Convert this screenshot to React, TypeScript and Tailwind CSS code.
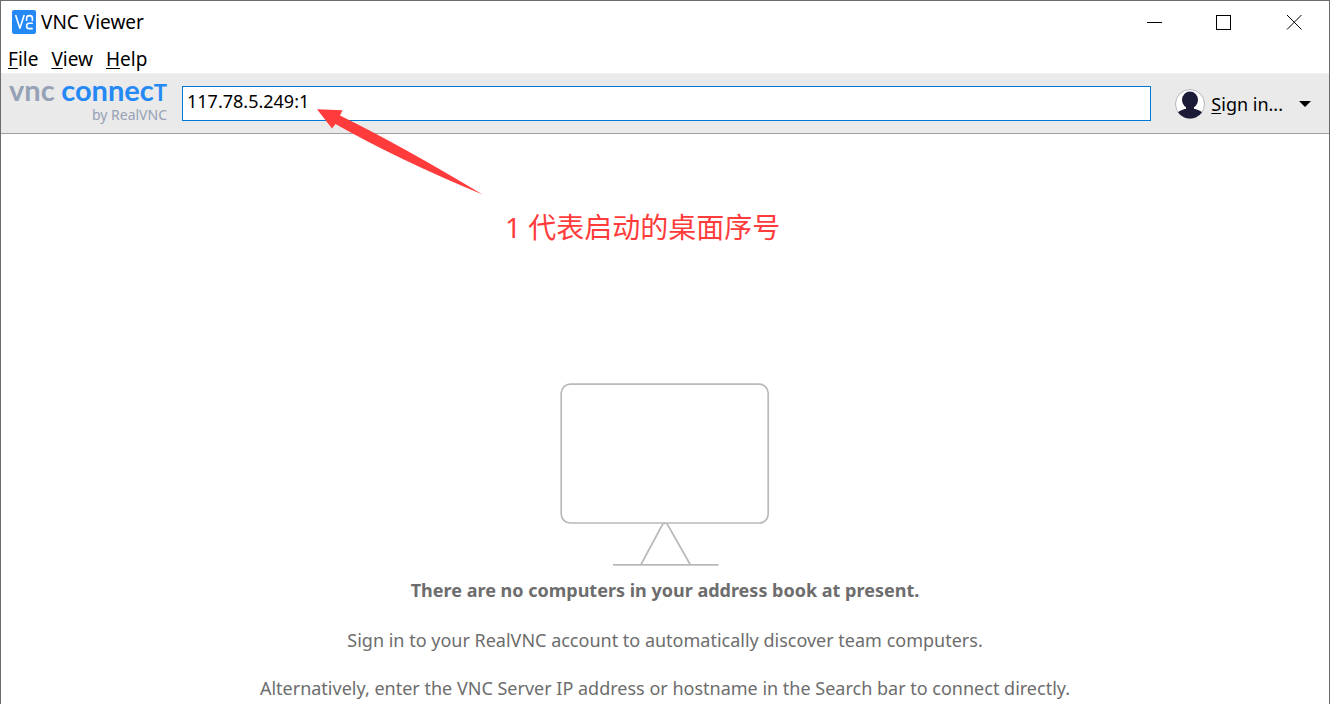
import type { ReactNode } from 'react';

const menus = [
  { key: 'F', rest: 'ile' },
  { key: 'V', rest: 'iew' },
  { key: 'H', rest: 'elp' },
];

function AppIcon() {
  return (
    <svg width="24" height="24" viewBox="0 0 24 24" fill="none" aria-hidden="true">
      <rect width="24" height="24" rx="2" fill="#2489f5" />
      <g stroke="#ffffff" strokeWidth="1.6">
        <path d="M3.6 5 7.9 18.3 12.2 5" strokeLinejoin="round" />
        <path d="M14.6 11V8.2c0-1.7 1-2.6 2.9-2.6s2.9.9 2.9 2.6V11" />
        <path d="M20.8 13.2h-3.6c-1.7 0-2.6.9-2.6 2.7s.9 2.7 2.6 2.7h3.6" />
      </g>
    </svg>
  );
}

function Logo() {
  return (
    <div className="flex w-[158px] flex-col pb-1 font-['Lato',sans-serif]">
      <div className="flex items-baseline justify-between text-[29px] leading-5 font-bold">
        <span className="text-[#95a1b5]">vnc</span>
        <span className="text-[#2489f5]">
          connec<span className="text-[22px] leading-5">T</span>
        </span>
      </div>
      <div className="mt-1 text-right font-['Noto_Sans',sans-serif] text-sm leading-4 text-[#95a1b5]">
        by RealVNC
      </div>
    </div>
  );
}

function Avatar() {
  return (
    <svg width="30" height="30" viewBox="0 0 30 30" aria-hidden="true">
      <clipPath id="avatar">
        <circle cx="15" cy="15" r="14.5" />
      </clipPath>
      <circle cx="15" cy="15" r="14.5" fill="#ffffff" stroke="#b5b5bb" />
      <g clipPath="url(#avatar)" fill="#1b1b38">
        <ellipse cx="15" cy="11" rx="8" ry="8.5" />
        <rect x="11" y="16" width="8" height="6" />
        <ellipse cx="15" cy="27" rx="14" ry="7.5" />
      </g>
    </svg>
  );
}

function Monitor() {
  return (
    <svg
      width="210"
      height="184"
      viewBox="0 0 210 184"
      fill="none"
      stroke="#b9b9bd"
      strokeWidth="1.7"
      aria-hidden="true"
    >
      <rect x="1.2" y="1.2" width="207" height="138.8" rx="9" />
      <path d="M81 181.5 102.2 142q2.8-3.5 5.6 0l22.4 39.5" />
      <path d="M53 181.8h105.5" />
    </svg>
  );
}

function Arrow() {
  return (
    <svg width="166" height="87" viewBox="0 0 166 87" fill="#ff3b3b" aria-hidden="true">
      <path d="M0 1.2 25.5 2.2 23 7.5Q85 38 165.5 86.5 80 51 18.5 16L15 20.5Z" />
    </svg>
  );
}

function WindowButton({ label, children }: { label: string; children: ReactNode }) {
  return (
    <button type="button" aria-label={label} className="flex h-full w-[70px] items-center justify-center">
      <svg width="16" height="16" fill="none" stroke="#000000" shapeRendering="crispEdges">
        {children}
      </svg>
    </button>
  );
}

export default function App() {
  return (
    <div className="relative flex min-h-screen flex-col border-x border-t border-[#6b6b6b] bg-white font-['Noto_Sans','Noto_Sans_CJK_SC',sans-serif] text-lg text-black">
      <header className="flex h-[42px] items-center">
        <div className="flex flex-1 items-center gap-[5px] pl-[11px]">
          <AppIcon />
          <h1 className="text-[19px] leading-6">VNC Viewer</h1>
        </div>
        <div className="flex h-full">
          <WindowButton label="Minimize">
            <path d="M1 8.5h15" />
          </WindowButton>
          <WindowButton label="Maximize">
            <rect x="0.5" y="1.5" width="14" height="14" />
          </WindowButton>
          <WindowButton label="Close">
            <path d="M1 1 15.5 15.5M15.5 1 1 15.5" shapeRendering="auto" />
          </WindowButton>
        </div>
      </header>

      <nav className="flex h-[30px] items-end gap-[13px] px-[7px] text-[19px]">
        {menus.map((menu) => (
          <button key={menu.key} type="button" className="leading-7">
            <span className="underline underline-offset-2">{menu.key}</span>
            {menu.rest}
          </button>
        ))}
      </nav>

      <div className="flex h-[61px] items-center border-t border-b border-t-[#f0f0f0] border-b-[#a0a0a0] bg-[#eaeaea] pl-2">
        <Logo />
        <input
          type="text"
          aria-label="Address"
          defaultValue="117.78.5.249:1"
          className="ml-[15px] h-[35px] min-w-0 flex-1 border border-[#0078d7] bg-white px-1 pb-[6px] outline-none"
        />
        <button type="button" className="ml-6 flex items-center pr-[18px]">
          <Avatar />
          <span className="ml-[6px]">
            <span className="underline underline-offset-2">S</span>ign in...
          </span>
          <svg className="ml-4" width="12" height="6" aria-hidden="true">
            <path d="M0 0h12L6 6Z" />
          </svg>
        </button>
      </div>

      <main className="flex flex-1 flex-col items-center pt-[249px] text-center text-[#6d6d6d]">
        <Monitor />
        <p className="mt-[11px] leading-6 font-bold">There are no computers in your address book at present.</p>
        <p className="mt-[26px] leading-6">Sign in to your RealVNC account to automatically discover team computers.</p>
        <p className="mt-6 leading-6">
          Alternatively, enter the VNC Server IP address or hostname in the Search bar to connect directly.
        </p>
      </main>

      <div className="absolute top-[107px] left-[316px]">
        <Arrow />
      </div>
      <p className="absolute top-[206px] left-[504px] text-[28px] leading-10 text-[#ff3b3b]">1 代表启动的桌面序号</p>
    </div>
  );
}
